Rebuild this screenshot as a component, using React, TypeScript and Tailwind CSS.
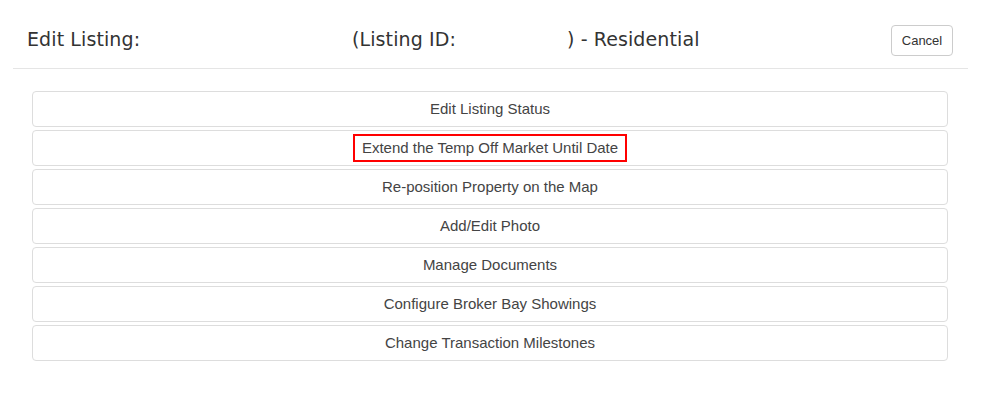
import React from 'react';

const actions = [
  'Edit Listing Status',
  'Extend the Temp Off Market Until Date',
  'Re-position Property on the Map',
  'Add/Edit Photo',
  'Manage Documents',
  'Configure Broker Bay Showings',
  'Change Transaction Milestones',
];

const App: React.FC = () => {
  return (
    <div className="w-[986px] h-[407px] bg-white">
      {/* Header */}
      <div className="ml-[13px] w-[955px] h-[69px] border-b border-[#e5e5e5] flex items-start">
        <div className="flex items-center h-[81px] pl-[14px] -mt-[1px] text-[19px] tracking-[0.1px] text-[#333] font-['DejaVu_Sans',Verdana,sans-serif]">
          <span className="w-[325px]">Edit Listing:</span>
          <span className="w-[215px]">(Listing ID:</span>
          <span>) - Residential</span>
        </div>
        <button className="ml-auto mt-[25px] mr-[15px] w-[62px] h-[31px] border border-[#ccc] rounded-[4px] bg-white text-[13px] text-[#333] font-['Liberation_Sans',Arial,sans-serif]">
          Cancel
        </button>
      </div>

      {/* Actions */}
      <div className="ml-[32px] w-[916px] mt-[22px] flex flex-col gap-[3px]">
        {actions.map((label, i) => (
          <button
            key={label}
            className="h-[36px] w-full border border-[#ddd] rounded-[4px] bg-white flex items-center justify-center text-[15px] text-[#444] font-['Liberation_Sans',Arial,sans-serif]"
          >
            {i === 1 ? (
              <span className="border-2 border-[#ff0000] px-[7px] h-[28px] flex items-center">{label}</span>
            ) : (
              label
            )}
          </button>
        ))}
      </div>
    </div>
  );
};

export default App;
